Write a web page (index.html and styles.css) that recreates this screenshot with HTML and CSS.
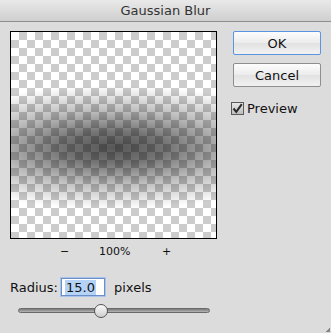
FILE: index.html
```html
<!DOCTYPE html>
<html>
<head>
<meta charset="utf-8">
<link rel="stylesheet" href="styles.css">
</head>
<body>
<div class="window">
  <div class="titlebar">Gaussian Blur</div>
  <div class="content">
    <div class="left">
      <div class="preview"><div class="blur"></div></div>
      <div class="zoom">
        <span class="minus">−</span>
        <span class="pct">100%</span>
        <span class="plus">+</span>
      </div>
      <div class="radius">
        <span class="label">Radius:</span>
        <span class="input"><span class="sel">15.0</span></span>
        <span class="unit">pixels</span>
      </div>
      <div class="slider"><div class="track"></div><div class="knob"></div></div>
    </div>
    <div class="right">
      <button class="btn ok">OK</button>
      <button class="btn">Cancel</button>
      <label class="check"><span class="box"><svg width="11" height="11" viewBox="0 0 11 11"><path d="M1.5 5.5 L4.3 8.8 L9.8 1.2" fill="none" stroke="#2a2a2a" stroke-width="2"/></svg></span>Preview</label>
    </div>
  </div>
  <div class="grip"></div>
</div>
</body>
</html>
```
FILE: styles.css
```css
html, body { margin: 0; padding: 0; }
body { width: 331px; height: 333px; overflow: hidden; background: #dcdcdc; font-family: "DejaVu Sans", sans-serif; color: #111; }
.window { position: relative; width: 331px; height: 333px; }
.titlebar { height: 21px; border-bottom: 1px solid #8e8e8e; background: linear-gradient(#e9e9e9, #cfcfcf); text-align: center; font-size: 13px; line-height: 21px; color: #333; }
.content { display: flex; padding: 9px 0 0 10px; }
.left { width: 208px; }
.preview { width: 205px; height: 206px; border: 1.5px solid #000; background-color: #fff; background-image: linear-gradient(45deg, #cccccc 25%, transparent 25%, transparent 75%, #cccccc 75%), linear-gradient(45deg, #cccccc 25%, transparent 25%, transparent 75%, #cccccc 75%); background-size: 16px 16px; background-position: 0 0, 8px 8px; position: relative; }
.blur { position: absolute; inset: 0; background: radial-gradient(ellipse 100% 30% at 50% 56%, rgba(0,0,0,0.66) 0%, rgba(0,0,0,0.55) 25%, rgba(0,0,0,0.25) 60%, rgba(0,0,0,0) 100%); }
.zoom { position: relative; height: 22px; font-size: 11px; margin-top: 2px; }
.zoom span { position: absolute; top: 4px; }
.minus { left: 50px; }
.pct { left: 89px; }
.plus { left: 152px; }
.radius { display: flex; align-items: center; margin-top: 14px; font-size: 13px; height: 20px; }
.label { width: 51px; }
.input { width: 44px; height: 18px; border: 1px solid #6a8fc9; box-shadow: 0 0 0 1px #a9c4ec; background: #fff; display: flex; align-items: center; padding-left: 3px; box-sizing: border-box; margin-right: 9px; }
.sel { background: #b5d3f7; line-height: 15px; padding: 0 1px; }
.slider { position: relative; height: 16px; margin: 6px 0 0 8px; width: 192px; }
.track { position: absolute; left: 0; right: 0; top: 5px; height: 5px; border-radius: 3px; background: linear-gradient(#7a7a7a, #9c9c9c 60%, #b8b8b8); border: 1px solid #6a6a6a; box-sizing: border-box; }
.knob { position: absolute; left: 76px; top: 1px; width: 12px; height: 12px; border-radius: 50%; border: 1px solid #555; background: linear-gradient(#fafafa, #cfcfcf); }
.right { margin-left: 15px; width: 88px; display: flex; flex-direction: column; }
.btn { width: 88px; height: 24px; font-family: "DejaVu Sans", sans-serif; font-size: 13px; color: #111; background: linear-gradient(#fdfdfd, #ececec 50%, #e2e2e2 51%, #f2f2f2); border: 1px solid #8e8e8e; border-radius: 2px; padding: 0; margin-bottom: 8px; }
.btn.ok { border-color: #5b94e0; }
.check { display: flex; align-items: center; font-size: 13px; margin: 6px 0 0 -2px; }
.box { width: 11px; height: 11px; border: 1px solid #5a5a5a; background: linear-gradient(#e6e6e6, #bdbdbd); margin-right: 3px; display: flex; }
.grip { position: absolute; right: 1px; bottom: 1px; width: 4px; height: 4px; background: linear-gradient(135deg, transparent 50%, #888 50%); }
```
